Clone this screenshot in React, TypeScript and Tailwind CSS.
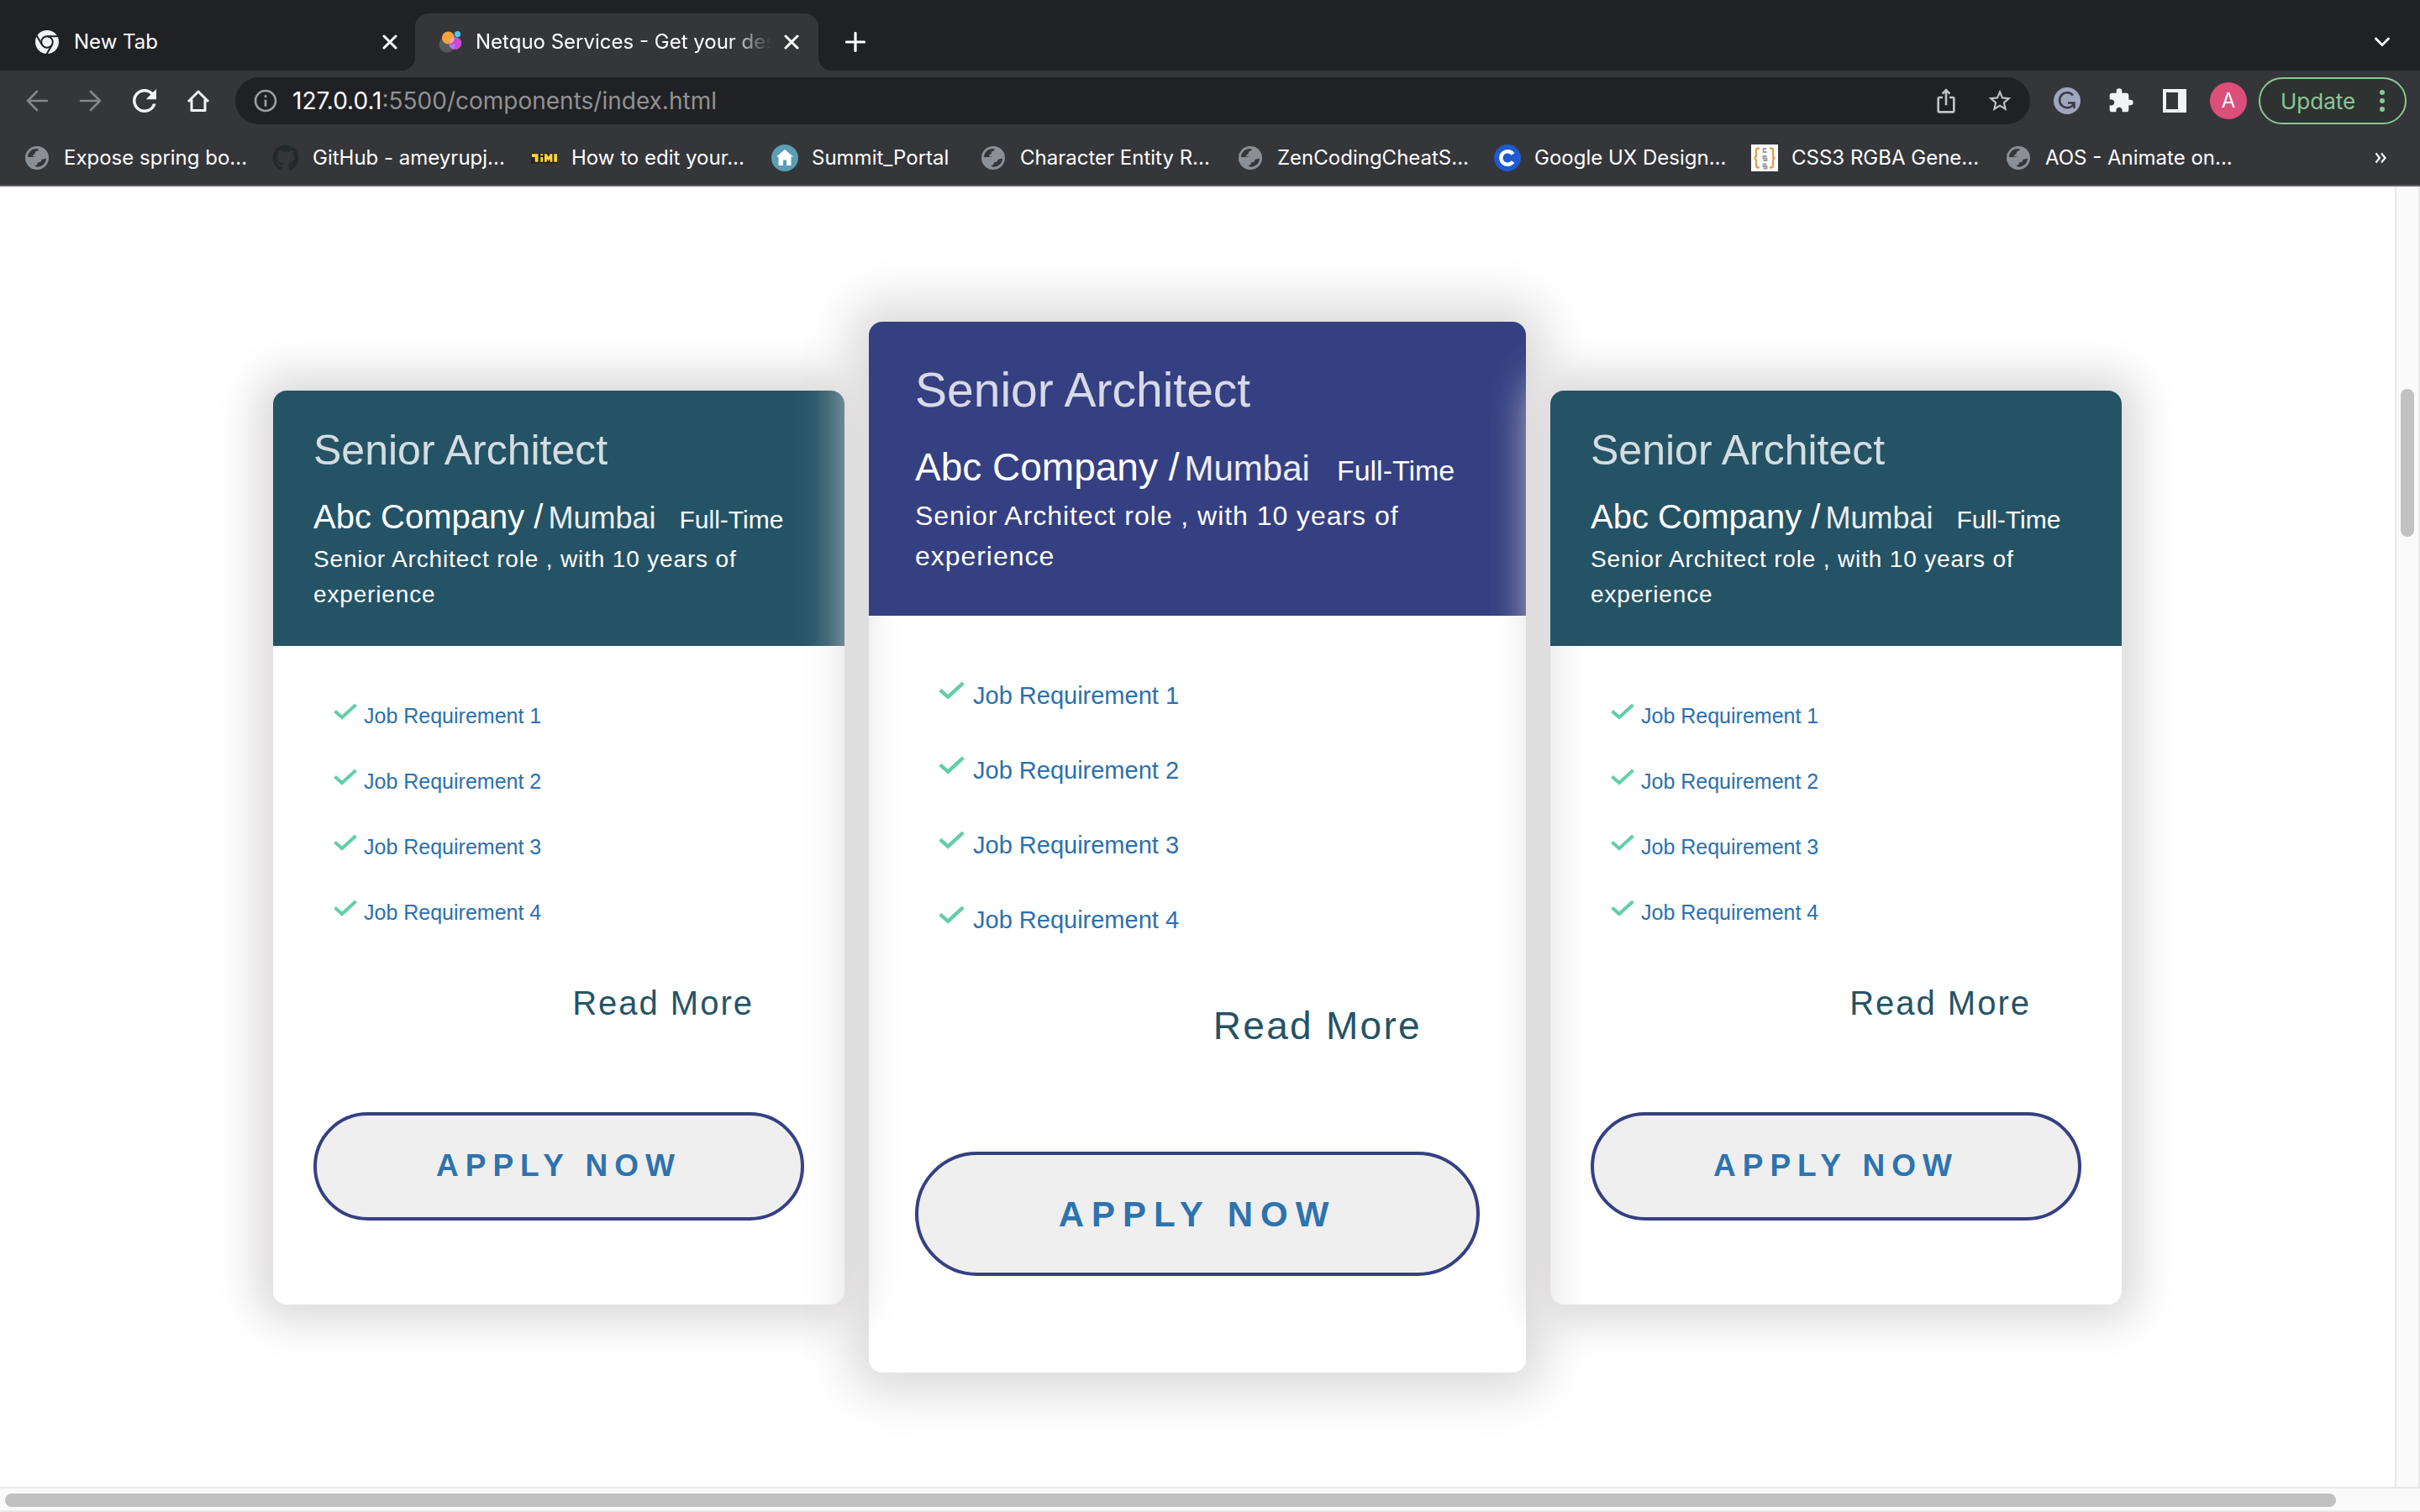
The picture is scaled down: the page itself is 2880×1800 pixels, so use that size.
import type { ReactNode } from "react";
import { FaGithub } from "react-icons/fa";
import { MdExtension, MdInfoOutline, MdIosShare, MdStarBorder } from "react-icons/md";

/* ---------- icons ---------- */

function ChromeMark() {
  return (
    <svg viewBox="-14 -14 28 28" className="size-7 shrink-0" aria-hidden="true">
      <circle r="14" fill="#f1f3f4" />
      <g stroke="#202124" strokeWidth="2" fill="none">
        <circle r="6.8" />
        {[0, 120, 240].map((a) => (
          <path key={a} d="M0 -6.8H13" transform={`rotate(${a})`} />
        ))}
      </g>
    </svg>
  );
}

function SiteMark() {
  return (
    <svg viewBox="0 0 28 26" className="h-[26px] w-7 shrink-0" aria-hidden="true">
      <circle cx="10" cy="16" r="9.5" fill="#58585a" />
      <circle cx="11.5" cy="8" r="7.6" fill="#f5a33b" />
      <circle cx="19.8" cy="14.5" r="7.5" fill="#c84bd6" />
      <path d="M12.5 16a7.5 7.5 0 0 0 5 5.7a9.5 9.5 0 0 0 2-5.7z" fill="#a77ff0" />
      <path d="M12.6 13a7.5 7.5 0 0 1 6-6a7.6 7.6 0 0 1-5.5 8.4z" fill="#fba8a5" />
      <circle cx="22.5" cy="3.6" r="3.6" fill="#4fc8f5" />
    </svg>
  );
}

function CloseIcon() {
  return (
    <svg viewBox="0 0 18 18" className="size-[18px]" aria-hidden="true">
      <path d="M2 2l14 14M16 2L2 16" stroke="#fff" strokeWidth="3" strokeLinecap="round" />
    </svg>
  );
}

function ArrowIcon({ flip = false }: { flip?: boolean }) {
  return (
    <svg viewBox="0 0 28 28" className={flip ? "size-7 -scale-x-100" : "size-7"} aria-hidden="true">
      <path d="M26 14H3M14 3L3 14l11 11" fill="none" stroke="#85868a" strokeWidth="2.6" strokeLinecap="round" strokeLinejoin="round" />
    </svg>
  );
}

function ReloadIcon() {
  return (
    <svg viewBox="4 4 16 16" className="size-7" fill="#f1f3f4" aria-hidden="true">
      <path d="M17.65 6.35A7.958 7.958 0 0 0 12 4c-4.420 0-7.990 3.580-7.990 8s3.570 8 7.990 8c3.730 0 6.840-2.550 7.730-6h-2.080A5.990 5.990 0 0 1 12 18c-3.310 0-6-2.690-6-6s2.690-6 6-6c1.660 0 3.140.69 4.220 1.780L13 11h7V4l-2.350 2.350z" />
    </svg>
  );
}

function HomeIcon() {
  return (
    <svg viewBox="0 0 28 28" className="size-7" aria-hidden="true">
      <path d="M2 15L14 3l12 12M6 12.5V25.5h16V12.5" fill="none" stroke="#f1f3f4" strokeWidth="3" strokeLinejoin="round" />
    </svg>
  );
}

function GrammarIcon() {
  return (
    <svg viewBox="0 0 32 32" className="size-8" aria-hidden="true">
      <circle cx="16" cy="16" r="16" fill="#a0a6c0" />
      <path d="M23 9.500A9 9 0 1 0 24 19.500M17 18.500h7.500V25" fill="none" stroke="#393b41" strokeWidth="2.6" />
    </svg>
  );
}

function GlobeMark() {
  return (
    <svg viewBox="0 0 28 28" className="size-7" aria-hidden="true">
      <circle cx="14" cy="14" r="14" fill="#8b9097" />
      <path d="M3 13C3 7.500 7.500 3.200 13.500 3l2.500.8c0 2.400-3.800 1.600-4.200 3.800l-.3 1.900c-1.500 0-2.500 1-2.500 2.700 1.500 0 3 .2 4.500.8z" fill="#35363a" />
      <path d="M25 14.500c0 5.500-4.800 10.300-10.800 10.300l-2.700-1c.5-1.800 3-.8 3-2.600 0-2.200 1.200-2.200 3-2.200s1.300-2.500 2.500-3.200z" fill="#35363a" />
    </svg>
  );
}

function EditorMark() {
  return (
    <svg viewBox="0 0 34 14" className="h-3.5 w-8" aria-hidden="true">
      <path d="M0 1h34v13H0z" fill="#26261f" />
      <path d="M1 2h8v10H5V6H1zM12 6h3v6h-3zM12 2h3v2h-3zM17 2h3l2 4 2-4h3v10h-3V8l-2 3-2-3v4h-3zM29 2h4v10h-4z" fill="#ffd53d" />
    </svg>
  );
}

function PortalMark() {
  return (
    <svg viewBox="0 0 32 32" className="size-8" aria-hidden="true">
      <circle cx="16" cy="16" r="16" fill="#5a9fb4" />
      <path d="M16 6L6 14.500h2.500V25H14v-6.500h4V25h5.500V14.500H26z" fill="#fff" />
    </svg>
  );
}

function CourseMark() {
  return (
    <svg viewBox="0 0 32 32" className="size-8" aria-hidden="true">
      <circle cx="16" cy="16" r="16" fill="#1f5ad0" />
      <path d="M22.500 11.500A7.800 7.800 0 1 0 22.500 20.500" fill="none" stroke="#fff" strokeWidth="4.4" />
    </svg>
  );
}

function BracesMark() {
  return (
    <svg viewBox="0 0 32 32" className="size-8" aria-hidden="true">
      <path d="M0 0h32v32H0z" fill="#fff" />
      <path d="M10 4.500H8.500Q6 4.500 6 7v5.500Q6 16 3.500 16Q6 16 6 19.500V25q0 2.500 2.500 2.500H10M22 4.500h1.500Q26 4.500 26 7v5.500q0 3.500 2.500 3.500Q26 16 26 19.500V25q0 2.500-2.500 2.500H22" fill="none" stroke="#e9a050" strokeWidth="2.4" />
      <path d="M18.500 5h-4v4h4M18.500 14h-4v2.500h4V19h-4M18.500 23.500h-4V26h4v2.500h-4" fill="none" stroke="#9a9ca0" strokeWidth="1.8" />
    </svg>
  );
}

function Tick({ className }: { className: string }) {
  return (
    <svg viewBox="0 0 28 20" className={className} aria-hidden="true">
      <path d="M1.500 9.500L10 17 26.500 2" fill="none" stroke="#63cfa6" strokeWidth="4" />
    </svg>
  );
}

/* ---------- browser chrome ---------- */

const bookmarks: { label: string; icon: ReactNode; width: string }[] = [
  { label: "Expose spring bo...", icon: <GlobeMark />, width: "w-[296px]" },
  { label: "GitHub - ameyrupj...", icon: <FaGithub className="size-8 text-[#24292e]" />, width: "w-[308px]" },
  { label: "How to edit your...", icon: <EditorMark />, width: "w-[286px]" },
  { label: "Summit_Portal", icon: <PortalMark />, width: "w-[248px]" },
  { label: "Character Entity R...", icon: <GlobeMark />, width: "w-[306px]" },
  { label: "ZenCodingCheatS...", icon: <GlobeMark />, width: "w-[306px]" },
  { label: "Google UX Design...", icon: <CourseMark />, width: "w-[306px]" },
  { label: "CSS3 RGBA Gene...", icon: <BracesMark />, width: "w-[302px]" },
  { label: "AOS - Animate on...", icon: <GlobeMark />, width: "w-[302px]" },
];

function TabStrip() {
  return (
    <div className="flex h-[84px] items-end bg-[#202124] pr-9 text-2xl text-white" role="tablist">
      <div className="flex h-[68px] w-[494px] items-center pr-5 pl-[42px]">
        <ChromeMark />
        <button role="tab" aria-selected="false" className="ml-[18px] flex-1 text-left">
          New Tab
        </button>
        <button aria-label="Close New Tab" className="grid size-5 place-items-center">
          <CloseIcon />
        </button>
      </div>
      <div className="relative flex h-[68px] w-[480px] items-center rounded-t-2xl bg-[#35363a] pr-[22px] pl-7">
        <span className="absolute bottom-0 -left-4 size-4 bg-[radial-gradient(circle_at_0_0,transparent_16px,#35363a_16px)]" />
        <span className="absolute -right-4 bottom-0 size-4 bg-[radial-gradient(circle_at_100%_0,transparent_16px,#35363a_16px)]" />
        <SiteMark />
        <button
          role="tab"
          aria-selected="true"
          className="ml-4 text-left whitespace-nowrap [mask-image:linear-gradient(to_right,#000_300px,transparent_352px)]"
        >
          Netquo Services - Get your des
        </button>
        <button aria-label="Close tab" className="ml-auto grid size-5 place-items-center">
          <CloseIcon />
        </button>
      </div>
      <div className="flex h-[68px] flex-1 items-center justify-between pl-8">
        <button aria-label="New tab">
          <svg viewBox="0 0 24 24" className="size-6" aria-hidden="true">
            <path d="M12 1.500v21M1.500 12h21" stroke="#fff" strokeWidth="3.2" strokeLinecap="round" />
          </svg>
        </button>
        <button aria-label="Search tabs">
          <svg viewBox="0 0 18 12" className="h-3 w-[18px]" aria-hidden="true">
            <path d="M1.500 2L9 9.500 16.500 2" fill="none" stroke="#fff" strokeWidth="2.8" strokeLinecap="round" />
          </svg>
        </button>
      </div>
    </div>
  );
}

function Toolbar() {
  return (
    <div className="flex h-[72px] items-center bg-[#35363a] pr-4 pl-[30px]">
      <div className="flex items-center gap-9">
        <button aria-label="Back"><ArrowIcon /></button>
        <button aria-label="Forward"><ArrowIcon flip /></button>
        <button aria-label="Reload"><ReloadIcon /></button>
        <button aria-label="Home"><HomeIcon /></button>
      </div>
      <div className="ml-[30px] flex h-14 flex-1 items-center rounded-full bg-[#202124] pr-5 pl-5">
        <button aria-label="Site information">
          <MdInfoOutline className="size-8 text-[#9aa0a6]" />
        </button>
        <div role="textbox" aria-label="Address" className="ml-4 flex-1 text-[28px] leading-9 text-[#909194]">
          <span className="text-white">127.0.0.1</span>:5500/components/index.html
        </div>
        <button aria-label="Share">
          <MdIosShare className="size-8 text-[#c0c1c2]" />
        </button>
        <button aria-label="Bookmark this page" className="ml-8">
          <MdStarBorder className="size-8 text-[#c0c1c2]" />
        </button>
      </div>
      <div className="ml-7 flex items-center">
        <button aria-label="Writing assistant"><GrammarIcon /></button>
        <button aria-label="Extensions" className="ml-8">
          <MdExtension className="size-8 text-[#f1f3f4]" />
        </button>
        <button aria-label="Side panel" className="ml-[34px] size-7 border-4 border-r-[10px] border-[#f1f3f4]" />
        <button aria-label="Profile" className="ml-7 grid size-11 place-items-center rounded-full bg-[#db4f7a] text-2xl text-white">
          A
        </button>
        <button className="ml-3.5 flex h-14 w-44 items-center justify-between rounded-full border-2 border-[#8bc795] bg-[#2e3331] pr-6 pl-6 text-[26px] text-[#8bc795]">
          Update
          <svg viewBox="0 0 6 28" className="h-7 w-1.5" fill="#8bc795" aria-hidden="true">
            <circle cx="3" cy="4" r="3" />
            <circle cx="3" cy="14" r="3" />
            <circle cx="3" cy="24" r="3" />
          </svg>
        </button>
      </div>
    </div>
  );
}

function BookmarksBar() {
  return (
    <nav aria-label="Bookmarks" className="flex h-[66px] items-center border-b-2 border-[#5f6065] bg-[#35363a] pr-10 pl-7 text-2xl text-white">
      {bookmarks.map((b) => (
        <a key={b.label} href="#" className={`flex shrink-0 items-center gap-4 whitespace-nowrap ${b.width}`}>
          <span className="grid size-8 shrink-0 place-items-center">{b.icon}</span>
          {b.label}
        </a>
      ))}
      <button aria-label="More bookmarks" className="ml-auto">
        <svg viewBox="0 0 14 14" className="size-3.5" aria-hidden="true">
          <path d="M1.500 1.500L6 7l-4.500 5.500M8 1.500L12.500 7 8 12.500" fill="none" stroke="#fff" strokeWidth="2.2" />
        </svg>
      </button>
    </nav>
  );
}

/* ---------- job cards ---------- */

const regular = {
  card: "w-[680px] rounded-2xl shadow-[0_0_50px_20px_#dbd9d9]",
  header: "rounded-t-2xl bg-[#255366] px-12 py-10",
  title: "text-[50px] leading-[62px]",
  row: "mt-6 h-12 leading-[48px]",
  company: "text-[40px]",
  city: "ml-1.5 text-[36px]",
  type: "ml-7 text-[30px]",
  text: "mt-1.5 text-[28px] leading-[42px]",
  body: "px-12 pt-[68px] pb-[100px]",
  list: "gap-12 pl-6",
  item: "gap-2 text-[25px] leading-[30px]",
  tick: "h-5 w-7",
  more: "mt-[69px] mr-[60px] text-[40px] leading-[48px]",
  button: "mt-[106px] h-[129px] border-4 text-[37px] tracking-[8px]",
};

const featured: typeof regular = {
  card: "w-[782px] rounded-2xl shadow-[0_0_58px_23px_#dbd9d9]",
  header: "rounded-t-2xl bg-[#354083] px-[55px] pt-[45px] pb-[47px]",
  title: "text-[57px] leading-[72px]",
  row: "mt-7 h-14 leading-[56px]",
  company: "text-[46px]",
  city: "ml-1.5 text-[42px]",
  type: "ml-8 text-[34px]",
  text: "mt-1.5 text-[32px] leading-[48px]",
  body: "px-[55px] pt-[78px] pb-[115px]",
  list: "gap-[55px] pl-7",
  item: "gap-2.5 text-[29px] leading-[34px]",
  tick: "h-[22px] w-[31px]",
  more: "mt-[81px] mr-[69px] text-[46px] leading-[56px]",
  button: "mt-[122px] h-[148px] border-4 text-[42px] tracking-[9px]",
};

const requirements = ["Job Requirement 1", "Job Requirement 2", "Job Requirement 3", "Job Requirement 4"];

function JobCard({ look }: { look: typeof regular }) {
  return (
    <article className={`shrink-0 ${look.card}`}>
      <header className={`text-white ${look.header}`}>
        <h2 className={`text-white/80 ${look.title}`}>Senior Architect</h2>
        <div className={`flex items-baseline whitespace-nowrap ${look.row}`}>
          <span className={look.company}>Abc Company /</span>
          <span className={`text-white/90 ${look.city}`}>Mumbai</span>
          <span className={look.type}>Full-Time</span>
        </div>
        <p className={`tracking-[0.03em] ${look.text}`}>Senior Architect role , with 10 years of experience</p>
      </header>
      <div className={`flex flex-col ${look.body}`}>
        <ul className={`flex flex-col text-[#2b70ae] ${look.list}`}>
          {requirements.map((r) => (
            <li key={r} className={`flex items-start ${look.item}`}>
              <Tick className={look.tick} />
              {r}
            </li>
          ))}
        </ul>
        <a href="#" className={`self-end tracking-wider text-[#255366] ${look.more}`}>
          Read More
        </a>
        <button className={`rounded-full border-[#354083] bg-[#efefef] font-bold text-[#2e73ae] ${look.button}`}>
          APPLY NOW
        </button>
      </div>
    </article>
  );
}

export default function App() {
  return (
    <div className="flex min-h-screen flex-col bg-white font-['Inter',sans-serif]">
      <TabStrip />
      <Toolbar />
      <BookmarksBar />
      <div className="flex flex-1">
        <main className="flex-1 overflow-hidden font-['Liberation_Sans',sans-serif]">
          <section className="flex items-center justify-center gap-[29px] pt-[161px] pb-24">
            <JobCard look={regular} />
            <JobCard look={featured} />
            <JobCard look={regular} />
          </section>
        </main>
        <div className="w-[30px] border-x-2 border-[#e8e8e8] bg-[#fafafa] px-[5px] pt-[241px]">
          <div className="h-44 rounded-full bg-[#c1c1c1]" />
        </div>
      </div>
      <div className="h-[30px] border-y-2 border-[#e8e8e8] bg-[#fafafa] pt-1.5 pr-[100px] pl-1.5">
        <div className="h-4 rounded-full bg-[#c1c1c1]" />
      </div>
    </div>
  );
}
